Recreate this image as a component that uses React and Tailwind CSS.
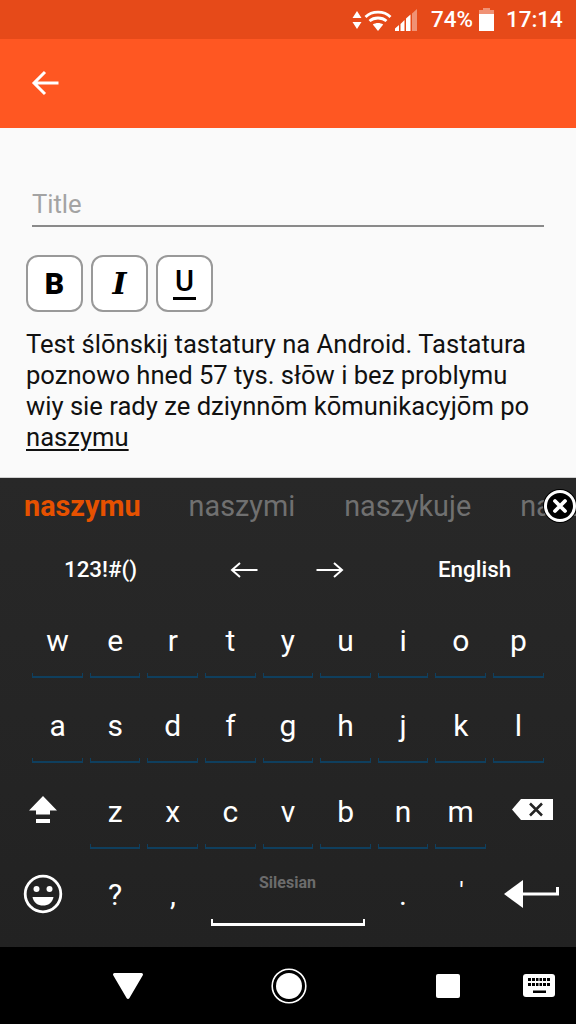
function StatusIcons() {
  return (
    <>
      <svg width="12" height="22" viewBox="0 0 12 22" fill="white">
        <path d="M6 2l4.500 7h-9zM6 20l-4.500-7h9z" />
      </svg>
      <svg width="28" height="22" viewBox="0 0 28 22" className="ml-[1px]" fill="none" stroke="white" strokeWidth="2.800">
        <path d="M1.500 8C8 1.500 20 1.500 26.500 8" />
        <path d="M5.500 12C10 8 18 8 22.500 12" />
        <path d="M14 22L8.800 15.500C11.800 13.500 16.200 13.500 19.200 15.500z" fill="white" stroke="none" />
      </svg>
      <svg width="22" height="22" viewBox="0 0 22 22" className="ml-[3px]" fill="white">
        <path d="M17 4.500L22 0V22H17z" fillOpacity="0.4" />
        <path d="M0 19.500L4 16V22H0zM5.500 15L9.500 11V22H5.500zM11 9.500L15.500 5.500V22H11z" />
      </svg>
    </>
  );
}

function Battery() {
  return (
    <svg width="15" height="23" viewBox="0 0 15 23" className="ml-[6px]">
      <path d="M4 0h7v2h4v4H0V2h4z" fill="white" fillOpacity="0.4" />
      <path d="M0 6h15v17H0z" fill="white" />
    </svg>
  );
}

function FormatButton({ children }) {
  return (
    <button className="w-[57px] h-[57px] bg-white border-2 border-[#999] rounded-[12px] flex items-center justify-center">
      {children}
    </button>
  );
}

function Key({ label }) {
  return (
    <div className="w-[57.6px] h-full px-[3.5px] relative flex items-center justify-center pb-[11px] text-[30px] text-white">
      {label}
      <span className="absolute left-[3.5px] right-[3.5px] bottom-[11px] h-[5px] border-x border-b-2 border-[#0f3f5e]" />
    </div>
  );
}

function KeyRow({ keys }) {
  return (
    <div className="h-[85.5px] flex pl-[28.8px]">
      {keys.split('').map((k) => (
        <Key key={k} label={k} />
      ))}
    </div>
  );
}

function Shift() {
  return (
    <svg width="28" height="28" viewBox="0 0 28 28" fill="white">
      <path d="M14 0L28 14.500H21V18.500H7V14.500H0z" />
      <path d="M7 23H21V27H7z" />
    </svg>
  );
}

function Backspace() {
  return (
    <svg width="42" height="22" viewBox="0 0 42 22">
      <path d="M9 0H41V21H9L0 10.500z" fill="white" />
      <path d="M18 4.500l12 12M30 4.500l-12 12" stroke="#242424" strokeWidth="2.500" />
    </svg>
  );
}

function Smiley() {
  return (
    <svg width="40" height="40" viewBox="0 0 40 40">
      <circle cx="20" cy="20" r="17.800" fill="none" stroke="white" strokeWidth="2.800" />
      <circle cx="13.500" cy="15" r="3" fill="white" />
      <circle cx="26.500" cy="15" r="3" fill="white" />
      <path d="M9.500 23h21c-1 6-5.500 8.500-10.500 8.500S10.500 29 9.500 23z" fill="white" />
    </svg>
  );
}

function EnterKey() {
  return (
    <svg width="55" height="28" viewBox="0 0 55 28" fill="white">
      <path d="M19 0V28L0 14z" />
      <path d="M18 12.500H52V7H55V15.500H18z" />
    </svg>
  );
}

function LineArrow({ flip }) {
  return (
    <svg width="28" height="16" viewBox="0 0 28 16" fill="none" stroke="white" strokeWidth="2" className={flip ? 'scale-x-[-1]' : ''}>
      <path d="M27.500 8H2M10 1L2 8L10 15" />
    </svg>
  );
}

export default function App() {
  return (
    <div className="w-[576px] h-[1024px] flex flex-col bg-[#fafafa] overflow-hidden font-['Roboto',sans-serif]">
      <div className="h-[39px] shrink-0 bg-[#e64a19] flex items-center pl-[351px] text-white">
        <StatusIcons />
        <span className="ml-[14px] text-[22.4px] font-medium leading-none">74%</span>
        <Battery />
        <span className="ml-[12px] text-[22.4px] font-medium leading-none">17:14</span>
      </div>

      <div className="h-[89px] shrink-0 bg-[#ff5722] flex items-center pl-[31px] pb-[1px]">
        <svg width="28" height="26" viewBox="0 0 28 26" fill="none" stroke="white" strokeWidth="3">
          <path d="M27.500 13H4M14 2L3 13L14 24" />
        </svg>
      </div>

      <main className="h-[349px] shrink-0 px-[26px]">
        <div className="mx-[6px] mt-[60px] h-[39px] border-b-2 border-[#8a8a8a] text-[25.6px] leading-[32px] text-[#a3a3a3]">
          Title
        </div>
        <div className="flex gap-[8px] mt-[28px]">
          <FormatButton>
            <span className="text-[30px] font-black text-black leading-none">B</span>
          </FormatButton>
          <FormatButton>
            <span className="text-[30px] font-bold italic text-black leading-none font-['DejaVu_Serif',serif]">I</span>
          </FormatButton>
          <FormatButton>
            <span className="flex flex-col items-center">
              <span className="text-[29px] font-medium text-black leading-[26px]">U</span>
              <span className="w-[23px] h-[3px] bg-black mt-[3px]" />
            </span>
          </FormatButton>
        </div>
        <p className="mt-[17px] text-[25.6px] leading-[31px] text-[#111] whitespace-nowrap">
          Test ślōnskij tastatury na Android. Tastatura
          <br />
          poznowo hned 57 tys. słōw i bez problymu
          <br />
          wiy sie rady ze dziynnōm kōmunikacyjōm po
          <br />
          <span className="underline decoration-2 underline-offset-[3px]">naszymu</span>
        </p>
      </main>

      <section className="h-[470px] shrink-0 bg-gradient-to-b from-[#282828] to-[#222222] border-t border-[#d0d0d0] relative">
        <div className="h-[58px] flex items-center text-[28.8px] whitespace-nowrap overflow-hidden text-[#707070]">
          <span className="ml-[24px] font-bold text-[#e65100]">naszymu</span>
          <span className="ml-[48px]">naszymi</span>
          <span className="ml-[49px]">naszykuje</span>
          <span className="ml-[49px]">naszy</span>
        </div>
        <button className="absolute top-[12px] left-[544px] w-[32px] h-[32px] rounded-full bg-black border-[3px] border-white flex items-center justify-center shadow-[0_0_0_1px_#000]">
          <svg width="16" height="16" viewBox="0 0 16 16">
            <path d="M3 3l10 10M13 3L3 13" stroke="white" strokeWidth="3.800" strokeLinecap="round" />
          </svg>
        </button>

        <div className="h-[67px] flex items-center text-white text-[22.4px] font-medium">
          <span className="w-[201px] text-center">123!#()</span>
          <span className="w-[86px] flex justify-center">
            <LineArrow />
          </span>
          <span className="w-[86px] flex justify-center">
            <LineArrow flip />
          </span>
          <span className="w-[203px] text-center">English</span>
        </div>

        <KeyRow keys="wertyuiop" />
        <KeyRow keys="asdfghjkl" />
        <div className="h-[85.5px] flex">
          <div className="w-[86.4px] flex justify-center items-center pb-[13px]">
            <Shift />
          </div>
          {'zxcvbnm'.split('').map((k) => (
            <Key key={k} label={k} />
          ))}
          <div className="pl-[22.4px] flex items-center pb-[13px]">
            <Backspace />
          </div>
        </div>

        <div className="h-[85px] flex items-center text-white pb-[16px]">
          <div className="w-[86px] flex justify-center">
            <Smiley />
          </div>
          <span className="w-[58px] text-center text-[30px]">?</span>
          <span className="w-[58px] text-center text-[30px]">,</span>
          <div className="w-[171px] flex flex-col items-center mt-[12px]">
            <span className="text-[16px] font-bold leading-[18px] text-[#6c6c6c]">Silesian</span>
            <span className="w-[154px] h-[7px] mt-[27px] border-x-2 border-b-[3px] border-white" />
          </div>
          <span className="w-[60px] text-center text-[30px]">.</span>
          <span className="w-[57px] text-center text-[26px] pb-[6px]">'</span>
          <div className="flex-1 pl-[14px] flex">
            <EnterKey />
          </div>
        </div>
      </section>

      <nav className="flex-1 bg-black flex items-center">
        <svg width="30" height="26" viewBox="0 0 30 26" className="ml-[113px]" fill="white">
          <path d="M1.500 0h27a1.500 1.500 0 0 1 1.300 2.200L16.300 25.200a1.500 1.500 0 0 1-2.600 0L.2 2.200A1.500 1.500 0 0 1 1.500 0z" />
        </svg>
        <svg width="36" height="36" viewBox="0 0 36 36" className="ml-[128px]">
          <circle cx="18" cy="18" r="16.800" fill="none" stroke="white" strokeWidth="1.600" />
          <circle cx="18" cy="18" r="13" fill="white" />
        </svg>
        <div className="ml-[129px] w-[24px] h-[24px] bg-white rounded-[2px]" />
        <svg width="32" height="23" viewBox="0 0 32 23" className="ml-[63px]">
          <rect width="32" height="23" rx="3" fill="white" />
          <path d="M5 4h3v3H5zM9 4h3v3H9zM13 4h2.500v3H13zM16.500 4H19v3h-2.500zM20 4h3v3h-3zM24 4h3v3h-3zM5 9h3v3H5zM9 9h3v3H9zM13 9h2.500v3H13zM16.500 9H19v3h-2.500zM20 9h3v3h-3zM24 9h3v3h-3zM10 16.500h13V19H10z" fill="black" />
        </svg>
      </nav>
    </div>
  );
}
